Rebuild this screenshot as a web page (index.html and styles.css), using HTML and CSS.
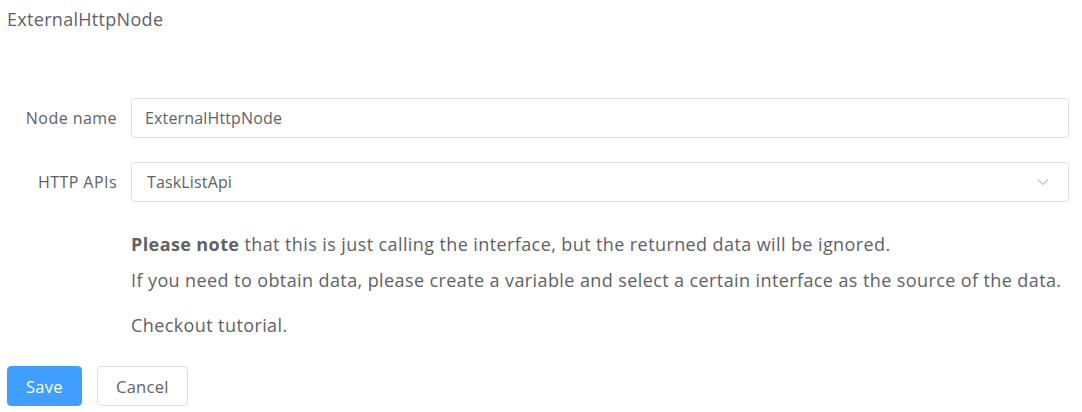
FILE: index.html
```html
<!DOCTYPE html>
<html>
<head>
<meta charset="utf-8">
<link rel="stylesheet" href="styles.css">
</head>
<body>
<div class="page">
  <div class="title">ExternalHttpNode</div>
  <form class="form">
    <div class="form-item">
      <label class="label">Node name</label>
      <div class="control">
        <div class="input">ExternalHttpNode</div>
      </div>
    </div>
    <div class="form-item">
      <label class="label">HTTP APIs</label>
      <div class="control">
        <div class="input select">
          <span class="value">TaskListApi</span>
          <svg class="arrow" width="14" height="14" viewBox="0 0 14 14"><path d="M2 4.5 L7 9.5 L12 4.5" fill="none" stroke="#c0c4cc" stroke-width="1.2"/></svg>
        </div>
      </div>
    </div>
    <div class="notes">
      <p><b>Please note</b> that this is just calling the interface, but the returned data will be ignored.</p>
      <p>If you need to obtain data, please create a variable and select a certain interface as the source of the data.</p>
      <p class="tutorial">Checkout tutorial.</p>
    </div>
    <div class="actions">
      <button type="button" class="btn primary">Save</button>
      <button type="button" class="btn">Cancel</button>
    </div>
  </form>
</div>
</body>
</html>
```
FILE: styles.css
```css
html, body { margin: 0; padding: 0; background: #fff; }
body { font-family: "Open Sans", "Noto Sans", sans-serif; color: #606266; }
.page { padding: 7px 13px 0 7px; }
.title { font-size: 18px; letter-spacing: 0.3px; line-height: 24px; color: #606266; height: 24px; }
.form { margin-top: 67px; }
.form-item { display: flex; align-items: center; margin-bottom: 24px; }
.label { width: 124px; box-sizing: border-box; padding-right: 14px; text-align: right; font-size: 16px; letter-spacing: 0.45px; color: #606266; white-space: nowrap; }
.control { flex: 1; }
.input { height: 40px; box-sizing: border-box; border: 1px solid #dcdfe6; border-radius: 4px; padding: 0 13px; display: flex; align-items: center; font-size: 16px; letter-spacing: 0.15px; color: #606266; }
.select { justify-content: space-between; padding-left: 15px; padding-right: 18px; }
.arrow { display: block; }
.notes { margin-left: 124px; margin-top: 24px; font-size: 18px; letter-spacing: 0.4px; }
.notes p { margin: 0; line-height: 36px; }
.notes .tutorial { margin-top: 9px; }
.actions { margin-top: 23px; display: flex; gap: 15px; }
.btn { height: 40px; padding: 0 18px; border-radius: 4px; border: 1px solid #dcdfe6; background: #fff; color: #606266; font-family: inherit; font-size: 16.5px; letter-spacing: 0.3px; }
.btn.primary { background: #409eff; border-color: #409eff; color: #fff; }
```
